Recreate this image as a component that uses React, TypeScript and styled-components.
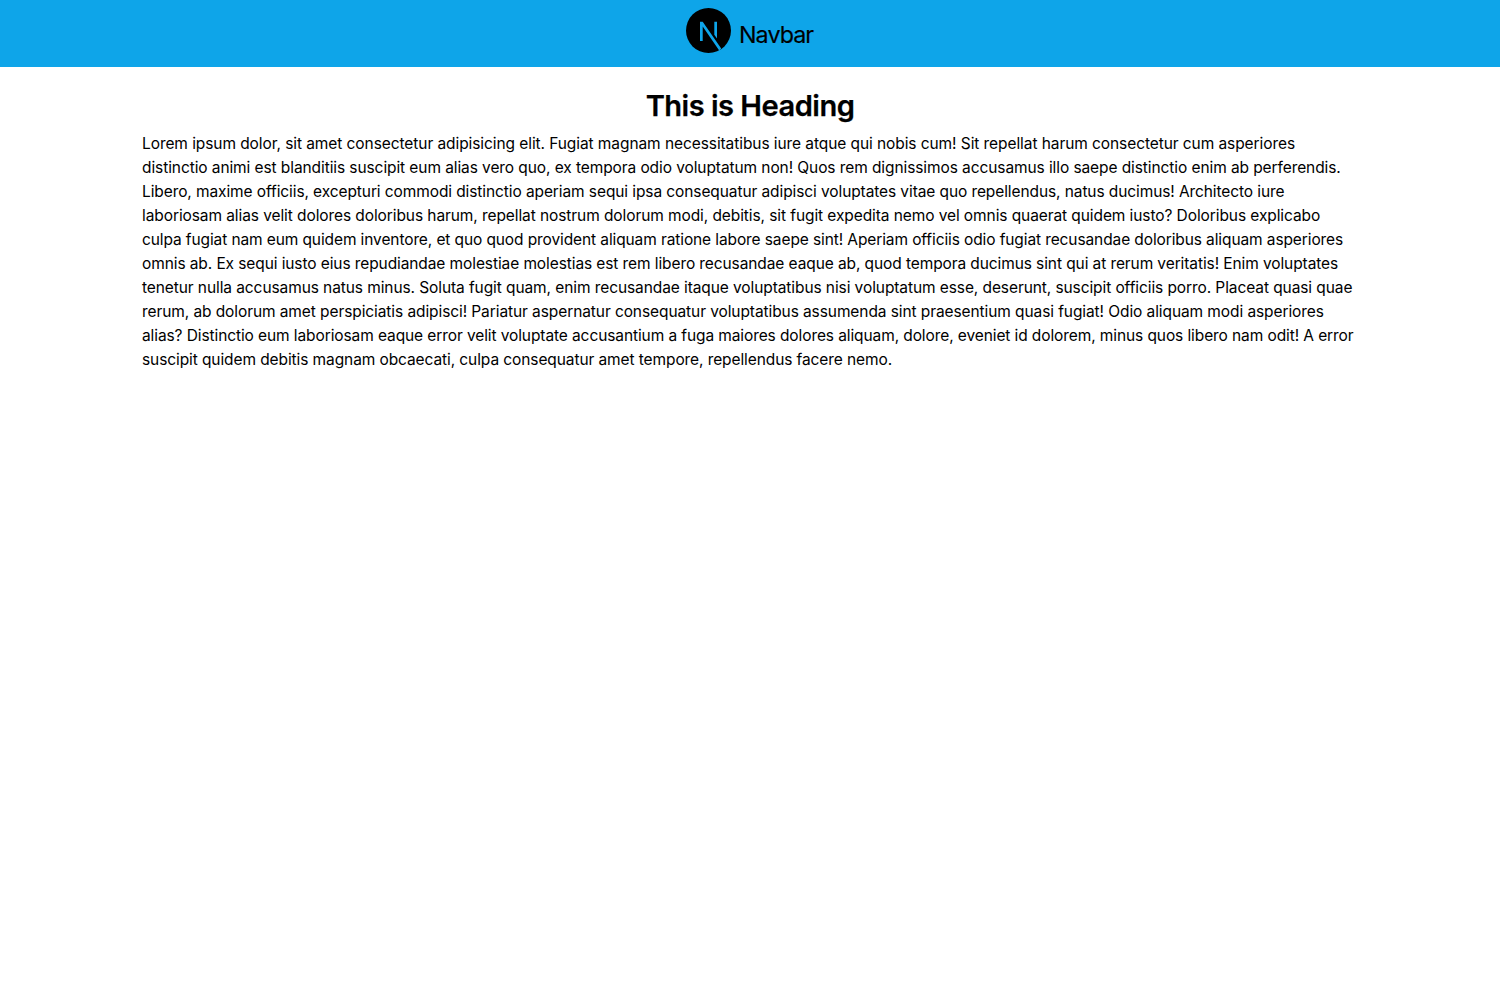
import React from "react";
import styled, { createGlobalStyle } from "styled-components";

const Global = createGlobalStyle`
  *, *::before, *::after { box-sizing: border-box; }
  body {
    margin: 0;
    background: #fff;
    color: #000;
    font-family: Inter, "Liberation Sans", sans-serif;
  }
`;
const Nav = styled.nav`
  display: flex;
  justify-content: center;
  gap: 8px;
  height: 67px;
  padding-top: 8px;
  background: #0ea5e9;
`;
const Logo = styled.svg`
  flex: none;
  width: 45px;
  height: 45px;
`;
const Brand = styled.span`
  width: 75px;
  padding-top: 11px;
  font-size: 23.3px;
  line-height: 32px;
  letter-spacing: -0.95px;
  white-space: nowrap;
  -webkit-text-stroke: 0.15px #000;
`;
const Main = styled.main`
  width: 1216px;
  margin: 0 auto;
  padding-top: 21px;
`;
const Heading = styled.h1`
  margin: 0 0 8px;
  font-size: 29.1px;
  line-height: 36px;
  font-weight: 600;
  letter-spacing: -0.52px;
  text-align: center;
  -webkit-text-stroke: 0.25px #000;
`;
const Copy = styled.p`
  margin: 0;
  font-size: 15.5px;
  line-height: 24px;
`;
const Line = styled.span<{ $tracking: number }>`
  display: block;
  white-space: nowrap;
  letter-spacing: ${(p) => p.$tracking}px;
`;

const lines: [string, number][] = [
  ["Lorem ipsum dolor, sit amet consectetur adipisicing elit. Fugiat magnam necessitatibus iure atque qui nobis cum! Sit repellat harum consectetur cum asperiores", -0.078],
  ["distinctio animi est blanditiis suscipit eum alias vero quo, ex tempora odio voluptatum non! Quos rem dignissimos accusamus illo saepe distinctio enim ab perferendis.", -0.088],
  ["Libero, maxime officiis, excepturi commodi distinctio aperiam sequi ipsa consequatur adipisci voluptates vitae quo repellendus, natus ducimus! Architecto iure", -0.095],
  ["laboriosam alias velit dolores doloribus harum, repellat nostrum dolorum modi, debitis, sit fugit expedita nemo vel omnis quaerat quidem iusto? Doloribus explicabo", -0.087],
  ["culpa fugiat nam eum quidem inventore, et quo quod provident aliquam ratione labore saepe sint! Aperiam officiis odio fugiat recusandae doloribus aliquam asperiores", -0.106],
  ["omnis ab. Ex sequi iusto eius repudiandae molestiae molestias est rem libero recusandae eaque ab, quod tempora ducimus sint qui at rerum veritatis! Enim voluptates", -0.096],
  ["tenetur nulla accusamus natus minus. Soluta fugit quam, enim recusandae itaque voluptatibus nisi voluptatum esse, deserunt, suscipit officiis porro. Placeat quasi quae", -0.089],
  ["rerum, ab dolorum amet perspiciatis adipisci! Pariatur aspernatur consequatur voluptatibus assumenda sint praesentium quasi fugiat! Odio aliquam modi asperiores", -0.088],
  ["alias? Distinctio eum laboriosam eaque error velit voluptate accusantium a fuga maiores dolores aliquam, dolore, eveniet id dolorem, minus quos libero nam odit! A error", -0.097],
  ["suscipit quidem debitis magnam obcaecati, culpa consequatur amet tempore, repellendus facere nemo.", -0.094],
];

export default function App() {
  return (
    <>
      <Global />
      <Nav>
        <Logo viewBox="0 0 45 45" aria-hidden="true">
          <circle cx="22.5" cy="22.5" r="22.5" fill="#000" />
          <path d="M14 13.8h2.7L35.2 40.6 33.2 42.4 16.7 18.6V33H14zM28.3 13.8H31v16.6l-2.7-3.7z" fill="#0ea5e9" />
        </Logo>
        <Brand>Navbar</Brand>
      </Nav>
      <Main>
        <Heading>This is Heading</Heading>
        <Copy>
          {lines.map(([text, tracking]) => (
            <Line key={text} $tracking={tracking}>{text + " "}</Line>
          ))}
        </Copy>
      </Main>
    </>
  );
}
